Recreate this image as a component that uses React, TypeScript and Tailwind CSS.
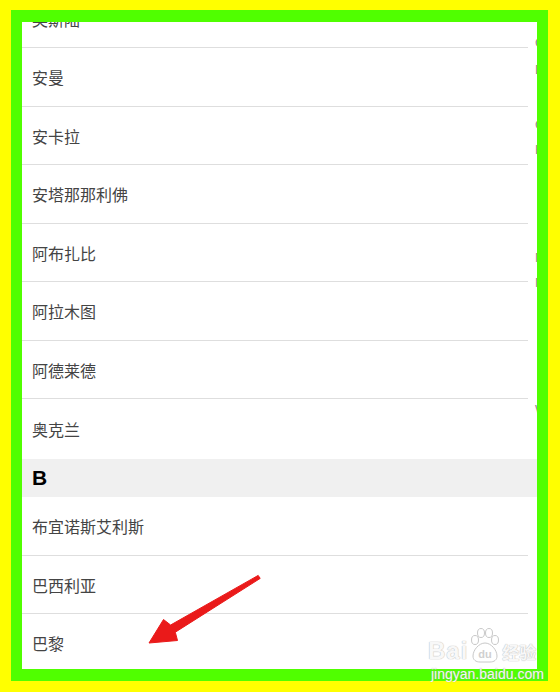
import type { ReactNode } from "react";

type Hang = {
  ming: string;
  gao: string;
  fenge: boolean;
};

const chengshiA: Hang[] = [
  { ming: "奥斯陆", gao: "h-[58.5px]", fenge: true },
  { ming: "安曼", gao: "h-[58.5px]", fenge: true },
  { ming: "安卡拉", gao: "h-[58.5px]", fenge: true },
  { ming: "安塔那那利佛", gao: "h-[58.5px]", fenge: true },
  { ming: "阿布扎比", gao: "h-[58.5px]", fenge: true },
  { ming: "阿拉木图", gao: "h-[58.5px]", fenge: true },
  { ming: "阿德莱德", gao: "h-[58.5px]", fenge: true },
  { ming: "奥克兰", gao: "h-[60px]", fenge: false },
];

const chengshiB: Hang[] = [
  { ming: "布宜诺斯艾利斯", gao: "h-[58.5px]", fenge: true },
  { ming: "巴西利亚", gao: "h-[58.5px]", fenge: true },
  { ming: "巴黎", gao: "h-[58.5px]", fenge: false },
];

// odcięte litery paska indeksu przy prawej krawędzi
const indeks = [
  { zi: "C", top: "top-[14px]" },
  { zi: "D", top: "top-[41px]" },
  { zi: "G", top: "top-[96px]" },
  { zi: "H", top: "top-[121px]" },
  { zi: "M", top: "top-[229px]" },
  { zi: "N", top: "top-[254px]" },
  { zi: "W", top: "top-[381px]" },
];

function Wiersz({ hang }: { hang: Hang }) {
  return (
    <div className={`relative flex ${hang.gao} items-center pl-[10px] text-[16px] text-[#444]`}>
      <span>{hang.ming}</span>
      {hang.fenge && <div className="absolute bottom-0 left-0 h-px w-[506px] bg-[#dedede]" />}
    </div>
  );
}

function Naglowek({ children }: { children: ReactNode }) {
  return (
    <div className="flex h-[38px] items-center bg-[#f0f0f0] pl-[10px] text-[21px] font-bold text-black [font-family:'Liberation_Sans',Arial,sans-serif]">
      {children}
    </div>
  );
}

function Strzalka() {
  return (
    <svg className="pointer-events-none absolute left-0 top-0" width="560" height="692" viewBox="0 0 560 692">
      <polygon
        points="258.2,575.4 170.6,625 163.5,619.5 149,643 177.5,640.5 175.3,632.2 260.2,578.4"
        fill="#ea1a1a"
        stroke="#ea1a1a"
        strokeWidth="1"
        strokeLinejoin="round"
      />
    </svg>
  );
}

function ZnakWodny() {
  return (
    <div className="pointer-events-none absolute left-[428px] top-[628px] flex flex-col items-start [font-family:'Liberation_Sans',Arial,sans-serif]">
      <div className="flex items-end">
        <span className="text-[24px] leading-[24px] font-bold tracking-[1px] text-white/90 [text-shadow:0_0_1px_#bbb,0_0_1px_#bbb]">
          Bai
        </span>
        <svg width="34" height="36" viewBox="0 0 34 36" className="-mb-[1px]">
          <g fill="#fff" stroke="#c8c8c8" strokeWidth="1">
            <ellipse cx="7" cy="12" rx="3.5" ry="4.5" />
            <ellipse cx="13" cy="5" rx="3.5" ry="4.5" />
            <ellipse cx="21" cy="5" rx="3.5" ry="4.5" />
            <ellipse cx="27" cy="12" rx="3.5" ry="4.5" />
            <path d="M17 15c-6 0-12 7-12 13 0 4 3 6 7 6h10c4 0 7-2 7-6 0-6-6-13-12-13z" />
          </g>
          <text x="17" y="30" textAnchor="middle" fontSize="11" fontWeight="bold" fill="#d0d0d0" fontFamily="Liberation Sans, Arial, sans-serif">
            du
          </text>
        </svg>
        <span className="text-[17px] leading-[22px] font-bold text-white/90 [font-family:'Noto_Sans_CJK_SC',sans-serif] [text-shadow:0_0_1px_#bbb,0_0_1px_#bbb]">
          经验
        </span>
      </div>
      <span className="mt-[4px] pl-[3px] text-[14px] leading-[14px] text-white/90 [text-shadow:0_0_1px_#999]">
        jingyan.baidu.com
      </span>
    </div>
  );
}

export default function App() {
  return (
    <div className="relative h-[692px] w-[560px] overflow-hidden bg-[#ffff00] pl-[11px] pr-[12px] pt-[10px] pb-[11px] [font-family:'Noto_Sans_CJK_SC','Noto_Sans',sans-serif]">
      <div className="h-full w-full bg-[#50ff00] pl-[11px] pr-[11px] pt-[12px] pb-[12px]">
        <div className="relative h-full w-full overflow-hidden bg-white">
          <div className="-mt-[32.5px] flex flex-col">
            {chengshiA.map((h) => (
              <Wiersz key={h.ming} hang={h} />
            ))}
            <Naglowek>B</Naglowek>
            {chengshiB.map((h) => (
              <Wiersz key={h.ming} hang={h} />
            ))}
          </div>

          {/* pasek indeksu, prawie cały poza kadrem */}
          <div className="absolute left-[513px] top-0 h-full w-[20px] text-[13px] text-[#8a8a8a] [font-family:'Liberation_Sans',Arial,sans-serif]">
            {indeks.map((l) => (
              <span key={l.zi} className={`absolute left-0 ${l.top} leading-[14px]`}>
                {l.zi}
              </span>
            ))}
          </div>
        </div>
      </div>

      <Strzalka />
      <ZnakWodny />
    </div>
  );
}
